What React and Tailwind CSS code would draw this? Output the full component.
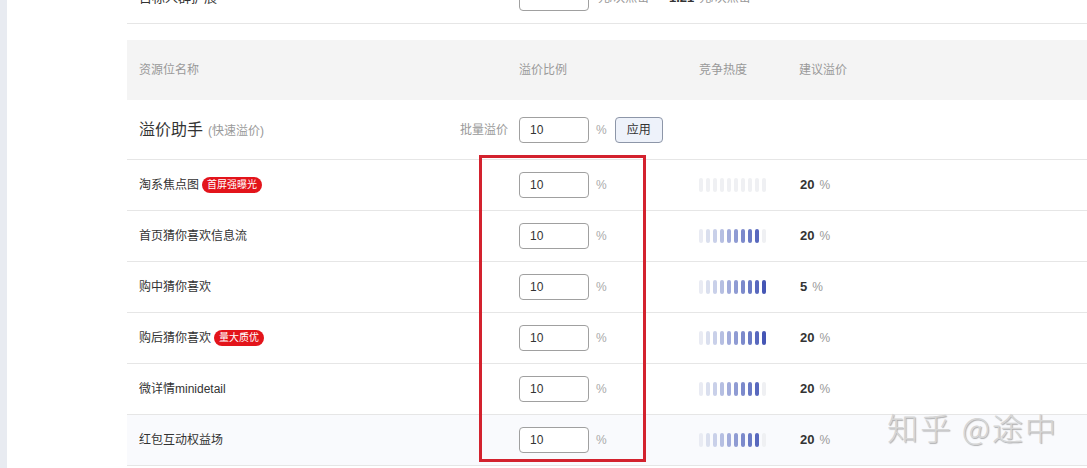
import React from "react";

const BAR_COLORS = [
  "#e9ebf3",
  "#dadfee",
  "#c9d0e9",
  "#b6bfe2",
  "#a3addb",
  "#8f9bd3",
  "#7c8acc",
  "#6a7ac5",
  "#5868be",
  "#4556b5",
];

const rows = [
  { name: "淘系焦点图", badge: "首屏强曝光", fill: 0, suggest: "20" },
  { name: "首页猜你喜欢信息流", fill: 9, suggest: "20" },
  { name: "购中猜你喜欢", fill: 10, suggest: "5" },
  { name: "购后猜你喜欢", badge: "量大质优", fill: 10, suggest: "20" },
  { name: "微详情minidetail", fill: 9, suggest: "20" },
  { name: "红包互动权益场", fill: 9, suggest: "20", hover: true },
];

function Heat({ fill }) {
  return (
    <div className="flex gap-[3px] items-center">
      {BAR_COLORS.map((c, i) => (
        <div
          key={i}
          className="w-[4px] h-[14px] rounded-[2px]"
          style={{ backgroundColor: i < fill ? c : "#eff0f3" }}
        />
      ))}
    </div>
  );
}

function Input({ value }) {
  return (
    <div className="w-[70px] h-[26px] border border-[#a0a0a0] rounded-[4px] bg-white flex items-center pl-[10px] text-[12px] text-[#333]">
      {value}
    </div>
  );
}

export default function App() {
  const font = {
    fontFamily: '"Liberation Sans", "Noto Sans CJK SC", sans-serif',
  };
  return (
    <div
      className="relative w-[1087px] h-[468px] overflow-hidden bg-white flex"
      style={font}
    >
      <div className="w-[7px] h-full bg-[#e8ebf1] shrink-0" />
      <div className="flex-1 pl-[120px]">
        {/* partially visible top row */}
        <div className="mt-[-27px] h-[51px] border-b border-[#e6e6e6] flex items-center">
          <div className="w-[392px] pl-[12px] text-[13px] text-[#333]">目标人群扩展</div>
          <Input value="" />
          <div className="ml-[9px] text-[12px] text-[#999] w-[71px]">元/次点击</div>
          <div className="text-[13px] font-bold text-[#333]">1.21</div>
          <div className="ml-[5px] text-[12px] text-[#999]">元/次点击</div>
        </div>

        {/* header */}
        <div className="mt-[16px] h-[60px] bg-[#f4f4f4] grid grid-cols-[392px_180px_100px_1fr] items-center text-[12px] text-[#999]">
          <div className="pl-[12px]">资源位名称</div>
          <div>溢价比例</div>
          <div>竞争热度</div>
          <div>建议溢价</div>
        </div>

        {/* helper row */}
        <div className="h-[60px] border-b border-[#e6e6e6] grid grid-cols-[392px_180px_100px_1fr] items-center">
          <div className="pl-[12px] pr-[11px] flex items-center justify-between">
            <div className="flex items-baseline">
              <span className="text-[16px] text-[#333]">溢价助手</span>
              <span className="ml-[5px] text-[12px] text-[#999]">(快速溢价)</span>
            </div>
            <span className="text-[12px] text-[#999]">批量溢价</span>
          </div>
          <div className="flex items-center">
            <Input value="10" />
            <span className="ml-[7px] text-[12px] text-[#aaa]">%</span>
            <div className="ml-[8px] w-[48px] h-[26px] rounded-[4px] border border-[#8d96a8] bg-[#eef2fa] flex items-center justify-center text-[12px] text-[#333]">
              应用
            </div>
          </div>
          <div />
          <div />
        </div>

        {/* data rows */}
        {rows.map((r, i) => (
          <div
            key={i}
            className={
              "h-[51px] border-b border-[#e6e6e6] grid grid-cols-[392px_180px_100px_1fr] items-center " +
              (r.hover ? "bg-[#f9fafd]" : "bg-white")
            }
          >
            <div className="pl-[12px] flex items-center text-[12px] text-[#333]">
              <span>{r.name}</span>
              {r.badge && (
                <span className="ml-[3px] h-[16px] px-[5px] rounded-full bg-[#e3141b] text-white text-[10px] leading-[16px]">
                  {r.badge}
                </span>
              )}
            </div>
            <div className="flex items-center">
              <Input value="10" />
              <span className="ml-[7px] text-[12px] text-[#aaa]">%</span>
            </div>
            <div>
              <Heat fill={r.fill} />
            </div>
            <div className="flex items-baseline pl-[1px]">
              <span className="text-[13px] font-bold text-[#333]">{r.suggest}</span>
              <span className="ml-[5px] text-[12px] text-[#999]">%</span>
            </div>
          </div>
        ))}
      </div>

      {/* red highlight rectangle */}
      <div className="absolute left-[479px] top-[155px] w-[167px] h-[307px] border-[3px] border-[#d3222e] pointer-events-none" />

      {/* watermark */}
      <div
        className="absolute left-[887px] top-[404px] text-[31px] font-light text-[#d6d6d6] tracking-[2px] pointer-events-none [text-shadow:1px_1px_1px_rgba(0,0,0,0.3)]"
        style={{ fontFamily: '"Noto Sans CJK SC", sans-serif' }}
      >
        知乎 @途中
      </div>
    </div>
  );
}
